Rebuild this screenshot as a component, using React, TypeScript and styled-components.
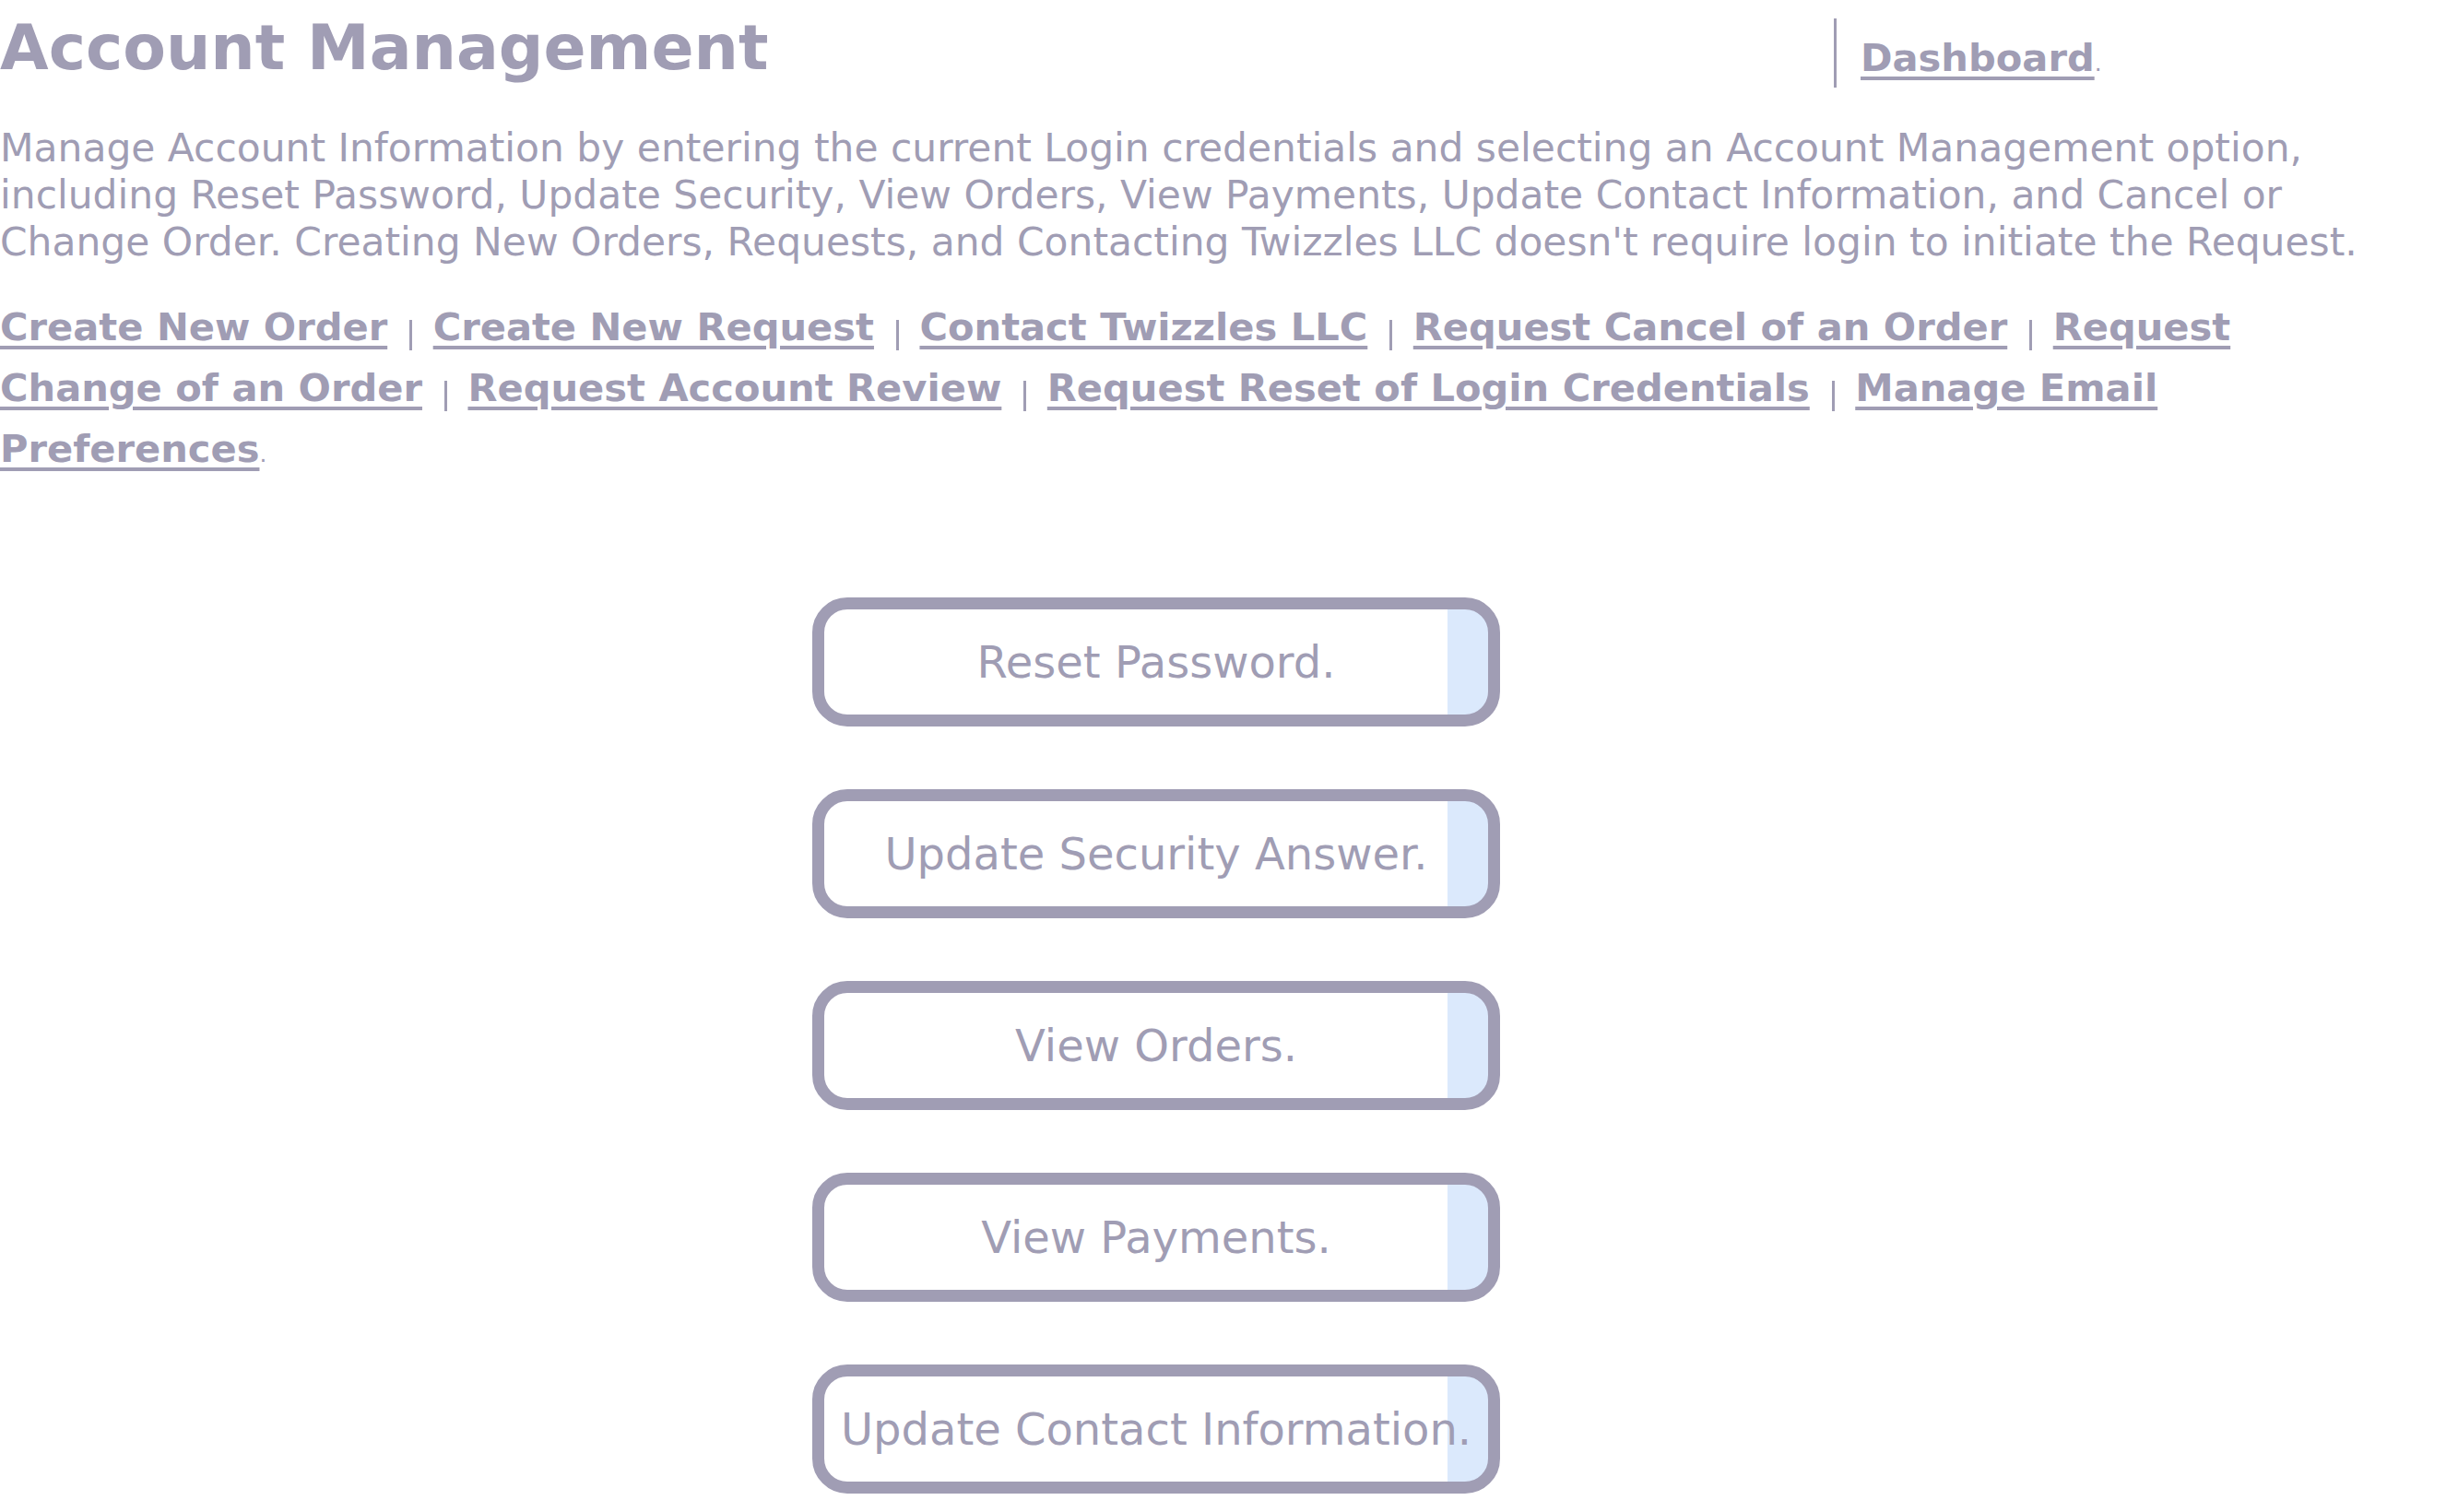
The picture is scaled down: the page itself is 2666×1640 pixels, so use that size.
import React from "react";
import styled, { createGlobalStyle } from "styled-components";

const ink = "#a09db4";
const font = `"DejaVu Sans", Verdana, sans-serif`;

const GlobalStyle = createGlobalStyle`
  html, body {
    margin: 0;
    padding: 0;
    background: #fff;
  }
  body {
    font-family: ${font};
    color: ${ink};
  }
`;

const Page = styled.div`
  width: 2580px;
  padding-bottom: 40px;
`;

const Header = styled.header`
  display: flex;
  justify-content: space-between;
  align-items: flex-start;
`;

const Title = styled.h1`
  margin: 12px 0 0;
  font-size: 68px;
  font-weight: bold;
  line-height: 80px;
`;

const NavBox = styled.div`
  box-sizing: border-box;
  width: 591px;
  height: 75px;
  margin-top: 20px;
  padding: 17px 0 0 26px;
  border-left: 3px solid ${ink};
  font-size: 41.6px;
  line-height: 52px;
  font-weight: bold;
`;

const Link = styled.a`
  color: ${ink};
  text-decoration: underline;
  text-decoration-thickness: 4px;
  text-underline-offset: 6px;
`;

const Intro = styled.p`
  margin: 40px 0 0;
  font-size: 42.4px;
  line-height: 51px;
`;

const LinkRow = styled.p`
  margin: 34px 0 0;
  font-size: 41.6px;
  line-height: 66px;
  font-weight: bold;
`;

const Sep = styled.span`
  display: inline-block;
  width: 3px;
  height: 33px;
  margin: 0 8px 0 24px;
  background: ${ink};
  vertical-align: -11px;
`;

const Dot = styled.span`
  font-weight: normal;
  font-size: 0.6em;
`;

const ButtonList = styled.div`
  display: flex;
  flex-direction: column;
  gap: 68px;
  width: 746px;
  margin: 122px 0 0 881px;
`;

const ActionButton = styled.button`
  box-sizing: border-box;
  height: 140px;
  padding: 0 6px;
  border: 13px solid ${ink};
  border-radius: 38px;
  background: linear-gradient(to right, #fff calc(100% - 44px), #dbe9fc calc(100% - 44px));
  color: ${ink};
  font-family: ${font};
  font-size: 48px;
  text-align: center;
  white-space: nowrap;
  cursor: pointer;
`;

const links = [
  "Create New Order",
  "Create New Request",
  "Contact Twizzles LLC",
  "Request Cancel of an Order",
  "Request Change of an Order",
  "Request Account Review",
  "Request Reset of Login Credentials",
  "Manage Email Preferences",
];

const actions = [
  "Reset Password.",
  "Update Security Answer.",
  "View Orders.",
  "View Payments.",
  "Update Contact Information.",
];

export default function App() {
  return (
    <>
      <GlobalStyle />
      <Page>
        <Header>
          <Title>Account Management</Title>
          <NavBox>
            <Link href="#">Dashboard</Link>
            <Dot>.</Dot>
          </NavBox>
        </Header>
        <Intro>
          Manage Account Information by entering the current Login credentials
          and selecting an Account Management option, including Reset Password,
          Update Security, View Orders, View Payments, Update Contact
          Information, and Cancel or Change Order. Creating New Orders, Requests,
          and Contacting Twizzles LLC doesn't require login to initiate the
          Request.
        </Intro>
        <LinkRow>
          {links.map((title, index) => (
            <React.Fragment key={title}>
              <Link href="#">{title}</Link>
              {index < links.length - 1 ? <Sep /> : <Dot>.</Dot>}{" "}
            </React.Fragment>
          ))}
        </LinkRow>
        <ButtonList>
          {actions.map((title) => (
            <ActionButton key={title}>{title}</ActionButton>
          ))}
        </ButtonList>
      </Page>
    </>
  );
}
